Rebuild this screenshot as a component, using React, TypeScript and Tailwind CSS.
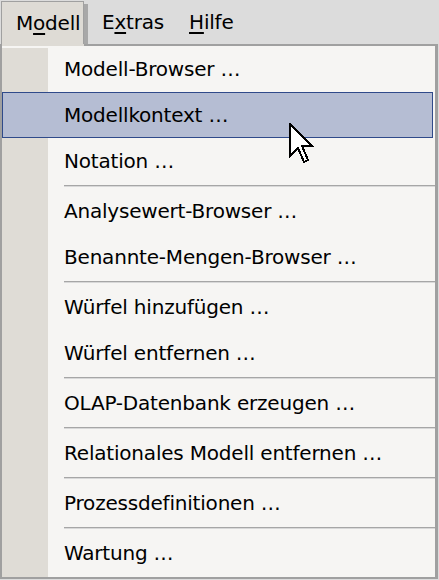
const items: (string | null)[] = [
  "Modell-Browser …",
  "Modellkontext …",
  "Notation …",
  null,
  "Analysewert-Browser …",
  "Benannte-Mengen-Browser …",
  null,
  "Würfel hinzufügen …",
  "Würfel entfernen …",
  null,
  "OLAP-Datenbank erzeugen …",
  null,
  "Relationales Modell entfernen …",
  null,
  "Prozessdefinitionen …",
  null,
  "Wartung …",
];

const Cursor = () => (
  <svg
    className="absolute left-[289px] top-[123px]"
    width="26"
    height="42"
    viewBox="0 0 13 21"
    shapeRendering="crispEdges"
  >
    <path
      d="M0.5 0.5 L0.5 16.5 L4.5 12.5 L7.5 19.5 L9.5 18.5 L6.5 11.5 L11.5 11.5 Z"
      fill="#fff"
      stroke="#000"
      strokeWidth="1"
      strokeLinejoin="miter"
    />
  </svg>
);

const App = () => {
  return (
    <div
      className="relative w-[439px] h-[580px] bg-[#dcdcdc] text-[20px] tracking-[-0.2px] text-black overflow-hidden"
      style={{ fontFamily: '"DejaVu Sans", Verdana, sans-serif' }}
    >
      {/* menu bar */}
      <div className="flex h-[44px] items-stretch">
        <div className="flex items-center pl-[14px] w-[83px] mt-[1px] ml-[1px] bg-[#dedbd5] border-l border-t border-r border-[#a0a0a0]">
          <span>
            M<span className="underline underline-offset-[3px]">o</span>dell
          </span>
        </div>
        <div className="w-[4px] mt-[4px] bg-[#a8a8a8]" />
        <div className="flex items-center gap-[25px] pl-[14px]">
          <span>
            E<span className="underline underline-offset-[3px]">x</span>tras
          </span>
          <span>
            <span className="underline underline-offset-[3px]">H</span>ilfe
          </span>
        </div>
      </div>

      {/* dropdown */}
      <div className="w-[438px] h-[535px] bg-[#f6f5f3] border-2 border-t-0 border-[#a0a0a0] border-r-[3px] flex flex-col">
        <div className="flex h-[2px] shrink-0">
          <div className="w-[82px] bg-[#dedbd5]" />
          <div className="flex-1 bg-[#a0a0a0]" />
        </div>
        <div className="flex flex-1">
          <div className="w-[46px] mt-[2px] bg-[#dfdcd6] shrink-0" />
          <div className="flex flex-col flex-1">
            {items.map((label, i) =>
              label === null ? (
                <div key={i} className="h-[4px] flex items-center pl-[16px]">
                  <div className="h-[2px] w-full bg-[#a6a6a6] border-b border-[#d8d8d8]" />
                </div>
              ) : label === "Modellkontext …" ? (
                <div
                  key={i}
                  className="h-[46px] -ml-[46px] mr-[2px] flex items-center pl-[61px] bg-[#b5bdd3] border border-[#2f4a8a]"
                >
                  {label}
                </div>
              ) : (
                <div key={i} className="h-[46px] flex items-center pl-[16px]">
                  {label}
                </div>
              ),
            )}
          </div>
        </div>
      </div>
      <Cursor />
    </div>
  );
};

export default App;
